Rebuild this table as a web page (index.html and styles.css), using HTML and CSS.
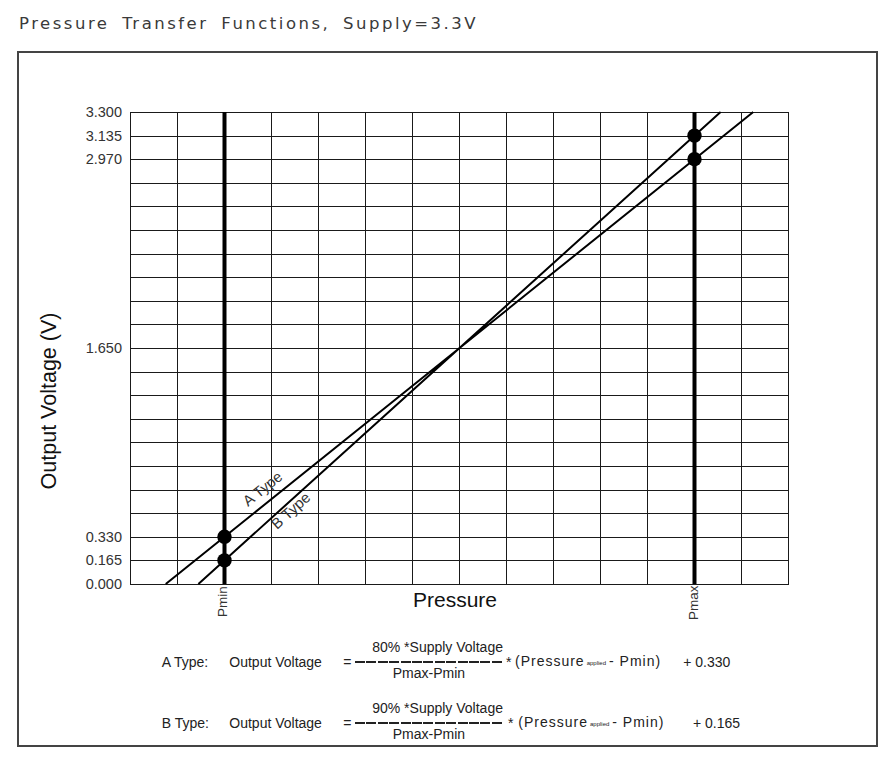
FILE: index.html
```html
<!DOCTYPE html>
<html lang="en">
<head>
<meta charset="utf-8">
<title>Pressure Transfer Functions</title>
<link rel="stylesheet" href="styles.css">
</head>
<body>
<h1 class="title">Pressure Transfer Functions, Supply=3.3V</h1>
<div class="frame">
  <svg class="chart" viewBox="19 53 857 580" width="857" height="580" xmlns="http://www.w3.org/2000/svg">
    <path class="grid" d="M130.5 112V584M177.5 112V584M271.5 112V584M318.5 112V584M365.5 112V584M412.5 112V584M459.5 112V584M506.5 112V584M553.5 112V584M600.5 112V584M647.5 112V584M741.5 112V584M788.5 112V584
      M130 112.5H789M130 136.1H789M130 159.7H789M130 183.3H789M130 206.9H789M130 230.5H789M130 254.1H789M130 277.7H789M130 301.3H789M130 324.9H789M130 348.5H789M130 372.1H789M130 395.7H789M130 419.3H789M130 442.9H789M130 466.5H789M130 490.1H789M130 513.7H789M130 537.3H789M130 560.9H789M130 584.5H789"/>
    <path class="pline" d="M224.5 112V584M694.5 112V584"/>
    <path class="fn" d="M165.75 584L753.25 112M198.39 584L720.61 112"/>
    <circle class="dot" cx="224.5" cy="536.8" r="7.2"/>
    <circle class="dot" cx="224.5" cy="560.4" r="7.2"/>
    <circle class="dot" cx="694.5" cy="159.2" r="7.2"/>
    <circle class="dot" cx="694.5" cy="135.6" r="7.2"/>
    <text class="fn-label" transform="translate(248 507) rotate(-38.72)">A Type</text>
    <text class="fn-label" transform="translate(277 530) rotate(-42.05)">B Type</text>
    <text class="tick" x="122" y="117">3.300</text>
    <text class="tick" x="122" y="140.6">3.135</text>
    <text class="tick" x="122" y="164.2">2.970</text>
    <text class="tick" x="122" y="353">1.650</text>
    <text class="tick" x="122" y="541.8">0.330</text>
    <text class="tick" x="122" y="565.4">0.165</text>
    <text class="tick" x="122" y="589">0.000</text>
    <text class="axis-title axis-y" transform="translate(56 401) rotate(-90)">Output Voltage (V)</text>
    <text class="axis-title axis-x" x="413" y="607">Pressure</text>
    <text class="p-label" transform="translate(226.5 617) rotate(-90)">Pmin</text>
    <text class="p-label" transform="translate(698 620) rotate(-90)">Pmax</text>
  </svg>
  <div class="formulas">
    <div class="eq">
      <span class="eq-type">A Type:</span>
      <span class="eq-lhs">Output Voltage</span>
      <span class="eq-sign">=</span>
      <span class="frac">
        <span class="num">80% *Supply Voltage</span>
        <span class="bar"></span>
        <span class="den">Pmax-Pmin</span>
      </span>
      <span class="eq-times">*</span>
      <span class="eq-term">(Pressure<span class="sub">applied</span>- Pmin)</span>
      <span class="eq-const">+ 0.330</span>
    </div>
    <div class="eq eq-b">
      <span class="eq-type">B Type:</span>
      <span class="eq-lhs">Output Voltage</span>
      <span class="eq-sign">=</span>
      <span class="frac">
        <span class="num">90% *Supply Voltage</span>
        <span class="bar"></span>
        <span class="den">Pmax-Pmin</span>
      </span>
      <span class="eq-times">*</span>
      <span class="eq-term">(Pressure<span class="sub">applied</span>- Pmin)</span>
      <span class="eq-const">+ 0.165</span>
    </div>
  </div>
</div>
</body>
</html>
```

FILE: styles.css
```css
* { box-sizing: border-box; }

html, body {
  margin: 0;
  padding: 0;
  background: #fff;
}

body {
  width: 893px;
  height: 766px;
  overflow: hidden;
  font-family: "Liberation Sans", Arial, sans-serif;
  color: #222;
}

.title {
  margin: 0;
  height: 51px;
  padding: 14px 0 0 19px;
  font-family: "DejaVu Sans", sans-serif;
  font-size: 16.5px;
  line-height: 20px;
  font-weight: normal;
  letter-spacing: 2.5px;
  word-spacing: 5px;
  color: #3a3a3a;
  white-space: nowrap;
}

.frame {
  margin-left: 17px;
  width: 861px;
  height: 696px;
  border: 2px solid #444;
}

.chart {
  display: block;
  width: 857px;
  height: 580px;
}

.grid {
  fill: none;
  stroke: #1a1a1a;
  stroke-width: 1;
  shape-rendering: crispEdges;
}

.pline {
  fill: none;
  stroke: #000;
  stroke-width: 4;
}

.fn {
  fill: none;
  stroke: #000;
  stroke-width: 2;
}

.dot { fill: #000; }

.fn-label {
  font-family: "Liberation Sans", Arial, sans-serif;
  font-size: 15px;
  fill: #333;
}

.tick {
  font-family: "Liberation Sans", Arial, sans-serif;
  font-size: 14.5px;
  fill: #333;
  text-anchor: end;
}

.axis-title {
  font-family: "Liberation Sans", Arial, sans-serif;
  font-size: 21px;
  fill: #111;
  text-anchor: middle;
}

.axis-y { font-size: 21.5px; }

.axis-x { text-anchor: start; }

.p-label {
  font-family: "Liberation Sans", Arial, sans-serif;
  font-size: 13.5px;
  fill: #333;
}

.formulas {
  display: flex;
  flex-direction: column;
  gap: 16px;
  padding: 6px 0 0 142.7px;
}

.eq {
  display: flex;
  align-items: center;
  font-size: 14px;
  line-height: 16px;
  color: #222;
  white-space: nowrap;
}

.eq > span { flex: none; }

.eq-type { width: 67.6px; }
.eq-lhs { width: 114px; }
.eq-sign { width: 11.7px; }

.frac {
  display: flex;
  flex-direction: column;
  width: 148px;
}

.num {
  text-align: right;
  margin-bottom: 6px;
}

.bar {
  height: 1.5px;
  background: repeating-linear-gradient(90deg, #222 0 10px, transparent 10px 11.4px);
}

.den {
  text-align: center;
  margin-top: 2.5px;
  padding-bottom: 3px;
}

.eq-times {
  width: 9px;
  margin-left: 3px;
}

.eq-term {
  width: 168.3px;
  letter-spacing: 1px;
}

.sub {
  font-size: 6px;
  letter-spacing: 0;
  margin: 0 3px 0 2px;
  vertical-align: 1px;
}

.eq-b .eq-times { margin-left: 5px; width: 10.3px; }
.eq-b .eq-term { width: 174.7px; }
```
